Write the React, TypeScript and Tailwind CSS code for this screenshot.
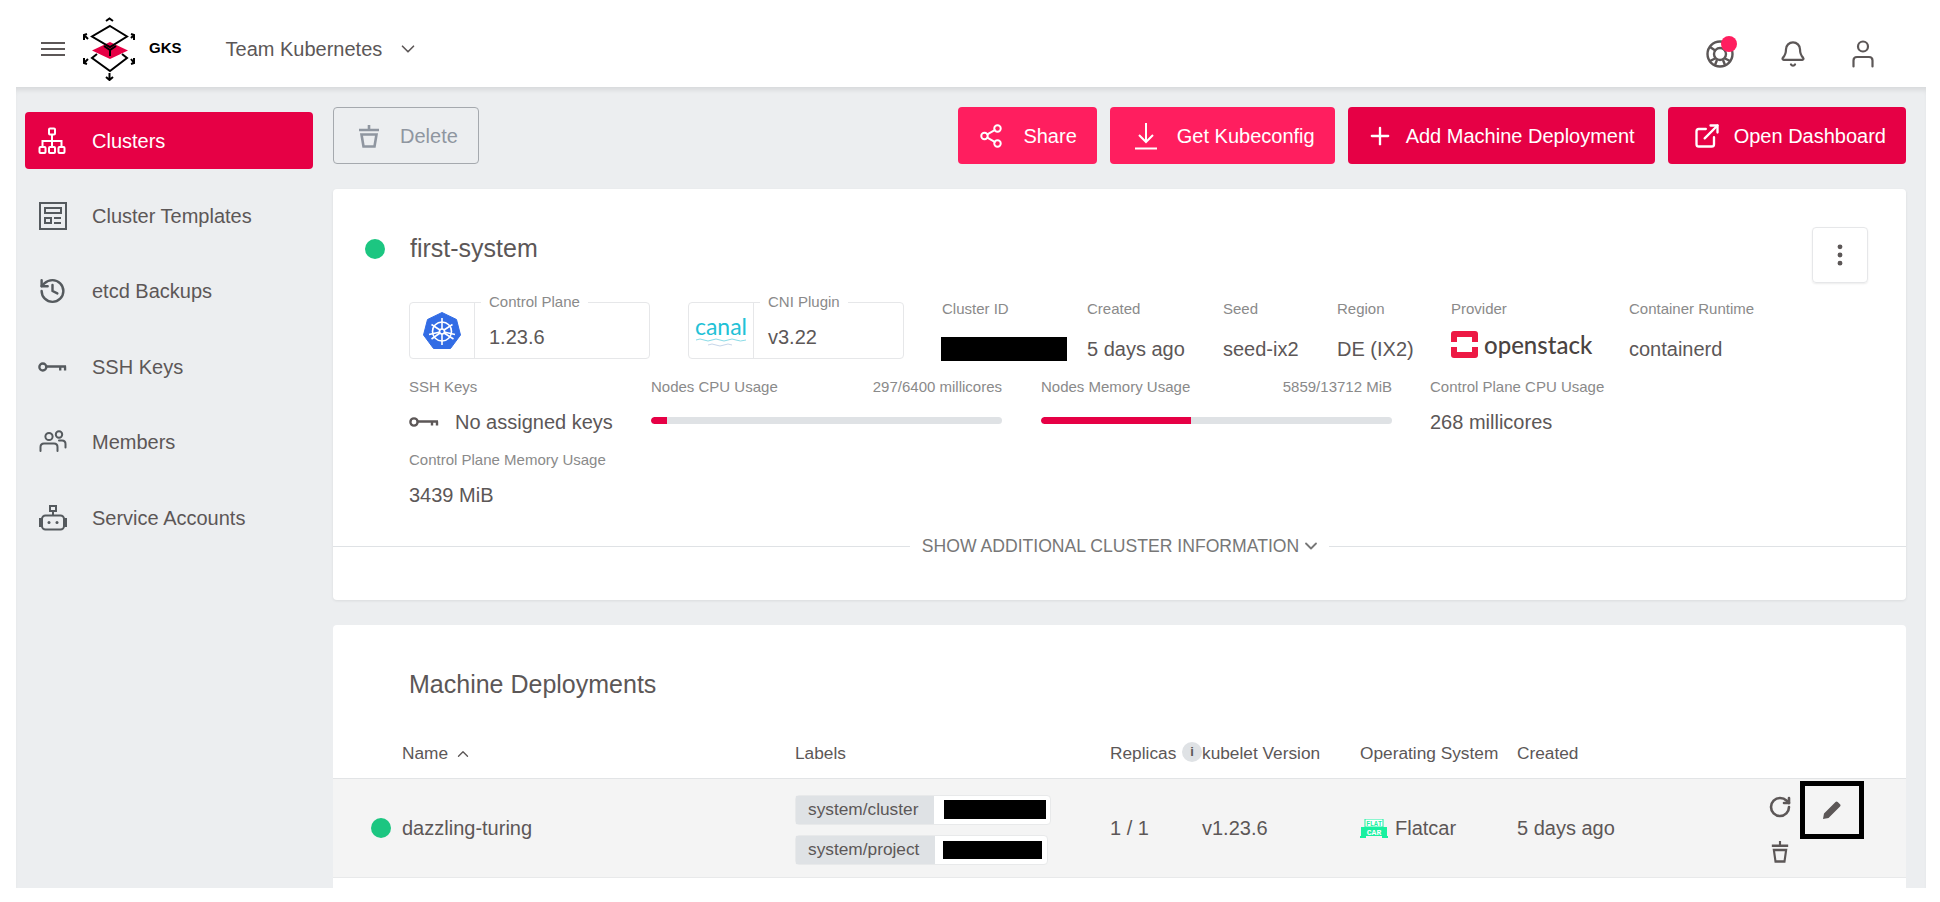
// App.tsx
import React from "react";
import {
  Bell,
  ChevronDown,
  ChevronUp,
  EllipsisVertical,
  ExternalLink,
  History,
  Plus,
  RotateCw,
  Share2,
} from "lucide-react";

type IconProps = { className?: string };

const SitemapIcon = ({ className }: IconProps) => (
  <svg viewBox="0 0 28 28" fill="none" stroke="currentColor" strokeWidth="2" className={className}>
    <rect x="11" y="1.5" width="6" height="6" rx="1" />
    <rect x="1.5" y="20" width="6" height="6" rx="1" />
    <rect x="11" y="20" width="6" height="6" rx="1" />
    <rect x="20.5" y="20" width="6" height="6" rx="1" />
    <path d="M14 7.5V20M4.5 20v-6h19v6" />
  </svg>
);

const TemplateIcon = ({ className }: IconProps) => (
  <svg viewBox="0 0 28 28" fill="none" stroke="currentColor" strokeWidth="2" className={className}>
    <rect x="1" y="1" width="26" height="26" />
    <rect x="6" y="6" width="16" height="5" />
    <rect x="6" y="16" width="6" height="5" />
    <path d="M15 16h7M15 21h7" />
  </svg>
);

const KeyIcon = ({ className }: IconProps) => (
  <svg viewBox="0 0 30 14" fill="none" stroke="currentColor" strokeWidth="2.4" className={className}>
    <circle cx="5" cy="7" r="3.6" />
    <path d="M9 6.5h20M23 6.5v4M28 6.5v4" />
  </svg>
);

const MembersIcon = ({ className }: IconProps) => (
  <svg viewBox="0 0 28 24" fill="none" stroke="currentColor" strokeWidth="2" strokeLinecap="round" className={className}>
    <circle cx="10" cy="6.5" r="3.6" />
    <circle cx="20" cy="4.5" r="3.2" />
    <path d="M1.5 21v-4c0-2 1.5-3.5 3.5-3.5h10c2 0 3.5 1.5 3.5 3.5v4M20 10.5h3c2 0 3.5 1.5 3.5 3.5v3.5" />
  </svg>
);

const RobotIcon = ({ className }: IconProps) => (
  <svg viewBox="0 0 28 26" className={className}>
    <g fill="none" stroke="currentColor" strokeWidth="2">
      <rect x="11" y="1" width="6" height="5" />
      <path d="M14 6v4" />
      <rect x="3" y="10.5" width="22" height="14" rx="3.5" />
      <path d="M3 14H1v7h2M25 14h2v7h-2" />
    </g>
    <circle cx="10" cy="17.5" r="1.5" fill="currentColor" />
    <circle cx="18" cy="17.5" r="1.5" fill="currentColor" />
  </svg>
);

const SupportIcon = ({ className }: IconProps) => (
  <svg viewBox="0 0 28 28" fill="none" stroke="currentColor" strokeWidth="2.4" className={className}>
    <circle cx="14" cy="14" r="12.5" />
    <circle cx="14" cy="14" r="6" />
    <path d="M4 7l6 4M24 7l-6 4M4 21l6-3M24 21l-6-3M11 20l-2 5M17 20l2 5" />
  </svg>
);

const UserIcon = ({ className }: IconProps) => (
  <svg viewBox="0 0 22 28" fill="none" stroke="currentColor" strokeWidth="2.2" strokeLinecap="round" className={className}>
    <circle cx="11" cy="6.5" r="5" />
    <path d="M1.5 26.5v-6c0-2 1.5-3.5 3.5-3.5h12c2 0 3.5 1.5 3.5 3.5v6" />
  </svg>
);

const TrashIcon = ({ className }: IconProps) => (
  <svg viewBox="0 0 22 24" fill="none" stroke="currentColor" strokeWidth="2.6" preserveAspectRatio="none" className={className}>
    <path d="M1 6h20M11 1v5" />
    <path d="M3.5 10.5h15l-2 12h-11z" />
  </svg>
);

const DownloadIcon = ({ className }: IconProps) => (
  <svg viewBox="0 0 24 28" fill="none" stroke="currentColor" strokeWidth="2" className={className}>
    <path d="M12 1v19M5 13l7 7 7-7M1 26.5h22" />
  </svg>
);

const PencilIcon = ({ className }: IconProps) => (
  <svg viewBox="0 0 20 20" fill="currentColor" className={className}>
    <path d="M1 19l1-5.5L13.5 2c.7-.7 1.500-.7 2.200 0l2.300 2.300c.7.7.7 1.500 0 2.200L6.500 18z" />
  </svg>
);

const GksLogo = () => (
  <svg viewBox="0 0 58 64" className="h-16 w-[58px]" fill="none">
    <path d="M12 33.5 30 25l18 8.5L30 42z" fill="#e60045" />
    <g stroke="#000" strokeWidth="2">
      <path d="M30 9 47 19.5 30 30 12 19.5z" />
      <path d="M17 37l-5 4 18 13 17-13-5-4" />
      <path d="M24 29l6 4 6-4M30 33v6" />
      <path d="M26 4l3.5-2.5L33 4M29.5 56v6M26 60l3.5 3 3.5-3" />
      <path d="M7 17l-3 1v5M4 18l4 4M51 17l3 1v5M54 18l-3 3" />
      <path d="M4 41v5l3 1M4 46l4-4M54 41v5l-3 1M54 46l-3-4" />
    </g>
  </svg>
);

const K8sLogo = () => (
  <svg viewBox="0 0 38 38" className="h-[38px] w-[38px]">
    <path d="M19 0.5 33.5 7.5 37.5 23 27.5 36.5H10.5L0.5 23 4.5 7.5z" fill="#326ce5" stroke="#326ce5" strokeLinejoin="round" />
    <g stroke="#fff" fill="none" strokeWidth="1.6">
      <circle cx="19" cy="19.5" r="9.5" />
      <circle cx="19" cy="19.5" r="2.5" />
      <path d="M19 6v11M19 22v11M8.5 12.5l8.5 5.5M21 21l9.5 6M29.5 12.5 21 18M17 21l-8.5 6M6 22.5l11-2.5M21 20l11 2.5" />
    </g>
  </svg>
);

const CanalLogo = () => (
  <div className="flex flex-col items-center">
    <span className="font-['Lato',sans-serif] text-[23px] leading-[24px] text-[#22c1d6]">canal</span>
    <svg viewBox="0 0 50 10" className="h-2.5 w-[50px]" fill="none" stroke="#8adbe6" strokeWidth="1">
      <path d="M0 2q4-2 8 0t8 0 8 0 8 0 8 0 10 0" />
      <path d="M12 7q4-2 8 0t8 0 8 0" stroke="#c6d6ea" />
    </svg>
  </div>
);

const OpenstackLogo = () => (
  <div className="flex items-center gap-1.5">
    <svg viewBox="0 0 27 27" className="h-[27px] w-[27px]">
      <rect width="27" height="27" rx="3" fill="#ed1944" />
      <rect x="6" y="6" width="15" height="15" fill="#fff" />
      <path d="M0 11h7v5H0zM20 11h7v5h-7z" fill="#fff" />
    </svg>
    <span className="font-['Lato',sans-serif] text-[24px] leading-[26px] font-medium text-[#4a4341]">openstack</span>
  </div>
);

const FlatcarLogo = () => (
  <svg viewBox="0 0 28 19" className="h-[19px] w-7">
    <rect x="5" y="0" width="18" height="8" fill="#fff" stroke="#19f0a0" />
    <rect x="1" y="8" width="26" height="9" fill="#19f0a0" />
    <path d="M0 17h6v2H0zM22 17h6v2h-6z" fill="#19f0a0" />
    <text x="14" y="6.5" textAnchor="middle" fontSize="6.5" fontWeight="700" fill="#19f0a0" fontFamily="Liberation Mono">FLAT</text>
    <text x="14" y="15.5" textAnchor="middle" fontSize="8" fontWeight="700" fill="#fff" fontFamily="Liberation Mono">CAR</text>
  </svg>
);

const NAV_ITEMS = [
  { label: "Cluster Templates", icon: <TemplateIcon className="h-7 w-7" /> },
  { label: "etcd Backups", icon: <History className="h-[30px] w-[30px]" strokeWidth={2} /> },
  { label: "SSH Keys", icon: <KeyIcon className="h-3.5 w-[30px]" /> },
  { label: "Members", icon: <MembersIcon className="h-6 w-7" /> },
  { label: "Service Accounts", icon: <RobotIcon className="h-[26px] w-7" /> },
];

const INFO_COLUMNS = [
  { label: "Created", value: "5 days ago", width: "w-[136px]" },
  { label: "Seed", value: "seed-ix2", width: "w-[114px]" },
  { label: "Region", value: "DE (IX2)", width: "w-[114px]" },
];

const TOP_BUTTONS = [
  { label: "Share", icon: <Share2 className="h-[30px] w-[26px]" strokeWidth={1.8} />, color: "bg-[#ff1e5f]", spacing: "pl-5 pr-5 gap-[19px]" },
  { label: "Get Kubeconfig", icon: <DownloadIcon className="h-7 w-6" />, color: "bg-[#ff1e5f]", spacing: "pl-6 pr-5 gap-[19px]" },
  { label: "Add Machine Deployment", icon: <Plus className="h-7 w-7" strokeWidth={2} />, color: "bg-[#e60045]", spacing: "pl-[18px] pr-5 gap-3" },
  { label: "Open Dashboard", icon: <ExternalLink className="h-7 w-7" strokeWidth={2} />, color: "bg-[#e60045]", spacing: "pl-[25px] pr-5 gap-[13px]" },
];

const Label = ({ children }: { children: React.ReactNode }) => (
  <div className="text-[15px] leading-[18px] text-[#8a8a8a]">{children}</div>
);

const FieldBox = ({
  label,
  value,
  logo,
  className,
}: {
  label: string;
  value: string;
  logo: React.ReactNode;
  className: string;
}) => (
  <div className={`relative flex h-[57px] rounded border border-[#e6e7e9] ${className}`}>
    <div className="flex w-[65px] shrink-0 items-center justify-center border-r border-[#e6e7e9]">{logo}</div>
    <div className="pt-[22px] pl-[14px] text-[20px] leading-6">{value}</div>
    <span className="absolute -top-[10px] left-[71px] bg-white px-2 text-[15px] leading-[18px] text-[#8a8a8a]">{label}</span>
  </div>
);

const UsageBar = ({
  label,
  usage,
  fill,
}: {
  label: string;
  usage: string;
  fill: string;
}) => (
  <div className="w-[351px]">
    <div className="flex justify-between">
      <Label>{label}</Label>
      <Label>{usage}</Label>
    </div>
    <div className="mt-[21px] h-[7px] overflow-hidden rounded bg-[#dfe2e5]">
      <div className="h-full rounded-l bg-[#e60045]" style={{ width: fill }} />
    </div>
  </div>
);

const App = () => {
  return (
    <div className="flex h-[902px] w-full flex-col overflow-hidden bg-white font-['Liberation_Sans',Arial,sans-serif] text-[#5c5757]">
      {/* Top bar */}
      <header className="flex h-[87px] shrink-0 items-center pt-2.5 pr-[66px] pl-[41px]">
        <div className="flex w-6 flex-col gap-1">
          <span className="h-[2px] bg-[#5c5757]" />
          <span className="h-[2px] bg-[#5c5757]" />
          <span className="h-[2px] bg-[#5c5757]" />
        </div>
        <div className="ml-[15px]">
          <GksLogo />
        </div>
        <span className="ml-[11px] text-[15px] font-bold text-black">GKS</span>
        <span className="ml-11 text-[20px]">Team Kubernetes</span>
        <ChevronDown className="ml-[15px] h-[22px] w-[22px]" strokeWidth={1.8} />
        <div className="mt-[11px] ml-auto flex items-center gap-[45px]">
          <div className="relative">
            <SupportIcon className="h-7 w-7" />
            <span className="absolute -top-1 -right-[3px] h-4 w-4 rounded-full bg-[#ff1e5f]" />
          </div>
          <Bell className="h-[30px] w-7" strokeWidth={1.9} />
          <UserIcon className="h-7 w-[22px]" />
        </div>
      </header>

      <div className="mr-3.5 ml-4 flex h-[801px] shrink-0 overflow-hidden bg-[#eceef0] shadow-[inset_0_5px_5px_-2px_rgba(0,0,0,0.09)]">
        {/* Sidebar */}
        <aside className="w-[317px] shrink-0 pt-[25px] pl-[9px]">
          <div className="flex h-[57px] w-[288px] items-center rounded bg-[#e60045] pl-[13px] text-[20px] text-white">
            <SitemapIcon className="h-7 w-7" />
            <span className="ml-[26px]">Clusters</span>
          </div>
          <nav className="mt-[18px] flex flex-col gap-[18.5px]">
            {NAV_ITEMS.map((item) => (
              <div key={item.label} className="flex h-[57px] items-center text-[20px]">
                <span className="ml-3 flex w-[30px] justify-center pl-[1px] text-[#555a5e]">{item.icon}</span>
                <span className="ml-[25px]">{item.label}</span>
              </div>
            ))}
          </nav>
        </aside>

        {/* Main content */}
        <main className="w-[1573px] shrink-0 pt-5">
          <div className="flex h-[57px] justify-between">
            <button className="flex w-[146px] items-center gap-5 rounded border border-[#a5a9ae] pl-6 text-[20px] text-[#8f96a0]">
              <TrashIcon className="h-6 w-[22px]" />
              Delete
            </button>
            <div className="flex gap-[13px]">
              {TOP_BUTTONS.map((btn) => (
                <button
                  key={btn.label}
                  className={`flex items-center rounded text-[20px] text-white ${btn.color} ${btn.spacing}`}
                >
                  {btn.icon}
                  {btn.label}
                </button>
              ))}
            </div>
          </div>

          {/* Cluster card */}
          <section className="mt-[25px] h-[411px] rounded bg-white pt-[38px] shadow-[0_1px_3px_rgba(0,0,0,0.08)]">
            <div className="flex h-14 items-start pr-[38px] pl-8">
              <div className="mt-[3px] flex items-center">
                <span className="h-5 w-5 rounded-full bg-[#1cc681]" />
                <h2 className="ml-[25px] text-[25px] font-normal">first-system</h2>
              </div>
              <button className="ml-auto flex h-14 w-14 items-center justify-center rounded border border-[#e6e7e9] shadow-[0_1px_2px_rgba(0,0,0,0.08)]">
                <EllipsisVertical className="h-7 w-7" strokeWidth={2.2} />
              </button>
            </div>

            <div className="mt-[19px] flex h-[59px] pl-[76px]">
              <FieldBox label="Control Plane" value="1.23.6" logo={<K8sLogo />} className="w-[241px]" />
              <FieldBox label="CNI Plugin" value="v3.22" logo={<CanalLogo />} className="ml-[38px] w-[216px]" />
              <div className="ml-[38px] w-[145px]">
                <div className="mt-[-2px]">
                  <Label>Cluster ID</Label>
                </div>
                <div className="mt-[19px] -ml-px h-6 w-[126px] bg-black" />
              </div>
              {INFO_COLUMNS.map((col) => (
                <div key={col.label} className={col.width}>
                  <div className="mt-[-2px]">
                    <Label>{col.label}</Label>
                  </div>
                  <div className="mt-[19px] text-[20px] leading-6">{col.value}</div>
                </div>
              ))}
              <div className="w-[178px]">
                <div className="mt-[-2px]">
                  <Label>Provider</Label>
                </div>
                <div className="mt-[13px]">
                  <OpenstackLogo />
                </div>
              </div>
              <div>
                <div className="mt-[-2px]">
                  <Label>Container Runtime</Label>
                </div>
                <div className="mt-[19px] text-[20px] leading-6">containerd</div>
              </div>
            </div>

            <div className="mt-[17px] flex h-[73px] pl-[76px]">
              <div className="w-[242px]">
                <Label>SSH Keys</Label>
                <div className="mt-[14px] flex items-center gap-4 text-[20px] leading-6">
                  <KeyIcon className="h-3.5 w-[30px]" />
                  No assigned keys
                </div>
              </div>
              <UsageBar label="Nodes CPU Usage" usage="297/6400 millicores" fill="4.6%" />
              <div className="ml-[39px]">
                <UsageBar label="Nodes Memory Usage" usage="5859/13712 MiB" fill="42.7%" />
              </div>
              <div className="ml-[38px]">
                <Label>Control Plane CPU Usage</Label>
                <div className="mt-[14px] text-[20px] leading-6">268 millicores</div>
              </div>
            </div>

            <div className="pl-[76px]">
              <Label>Control Plane Memory Usage</Label>
              <div className="mt-[14px] text-[20px] leading-6">3439 MiB</div>
            </div>

            <div className="mt-[29px] flex h-5 items-center gap-2 text-[17.6px] text-[#777]">
              <span className="h-px flex-1 bg-[#dfe2e5]" />
              <span className="flex items-center gap-0.5 pl-1">
                SHOW ADDITIONAL CLUSTER INFORMATION
                <ChevronDown className="h-5 w-5" strokeWidth={2.2} />
              </span>
              <span className="h-px flex-1 bg-[#dfe2e5]" />
            </div>
          </section>

          {/* Machine deployments card */}
          <section className="mt-[25px] h-[263px] rounded-t bg-white pt-[44px]">
            <h3 className="h-[30px] pl-[76px] text-[25px] leading-[30px] font-normal">Machine Deployments</h3>
            <div className="mt-[30px] grid h-[50px] grid-cols-[69px_393px_315px_92px_158px_157px_251px_138px] items-center border-b border-[#e2e4e6] text-[17.3px]">
              <span />
              <span className="flex items-center gap-1.5">
                Name
                <ChevronUp className="h-[18px] w-[18px]" strokeWidth={1.8} />
              </span>
              <span>Labels</span>
              <span className="relative">
                Replicas
                <span className="absolute top-px left-[72px] flex h-5 w-5 items-center justify-center rounded-full bg-[#dfe2e5] text-[13px] font-bold">
                  i
                </span>
              </span>
              <span>kubelet Version</span>
              <span>Operating System</span>
              <span>Created</span>
              <span />
            </div>
            <div className="grid h-[99px] grid-cols-[69px_393px_315px_92px_158px_157px_251px_138px] items-center border-b border-[#e8e9ea] bg-[#f4f4f4] text-[20px]">
              <span className="ml-[38px] h-5 w-5 rounded-full bg-[#1cc681]" />
              <span>dazzling-turing</span>
              <div className="mt-[3px] flex flex-col gap-[10px] text-[17.3px]">
                <div className="flex h-[30px] w-[256px] items-center rounded border border-[#e8e9ea] bg-white">
                  <span className="flex h-full w-[138px] items-center bg-[#dfe2e5] pl-3">system/cluster</span>
                  <span className="ml-[10px] h-[19px] w-[102px] bg-black" />
                </div>
                <div className="flex h-[30px] w-[253px] items-center rounded border border-[#e8e9ea] bg-white">
                  <span className="flex h-full w-[139px] items-center bg-[#dfe2e5] pl-3">system/project</span>
                  <span className="ml-2 h-[18px] w-[99px] bg-black" />
                </div>
              </div>
              <span>1 / 1</span>
              <span>v1.23.6</span>
              <span className="flex items-center gap-[7px]">
                <FlatcarLogo />
                Flatcar
              </span>
              <span>5 days ago</span>
              <div className="grid grid-cols-[32px_64px] grid-rows-[54px_42px] justify-start">
                <span className="flex items-center">
                  <RotateCw className="h-6 w-6" strokeWidth={2.6} />
                </span>
                <button className="row-span-2 mt-px flex h-[58px] w-16 items-center justify-center self-start border-[5px] border-black">
                  <PencilIcon className="h-5 w-5" />
                </button>
                <span className="flex h-[34px] items-center pl-[3px]">
                  <TrashIcon className="h-[23px] w-[18px]" />
                </span>
              </div>
            </div>
          </section>
        </main>
      </div>
    </div>
  );
};

export default App;
